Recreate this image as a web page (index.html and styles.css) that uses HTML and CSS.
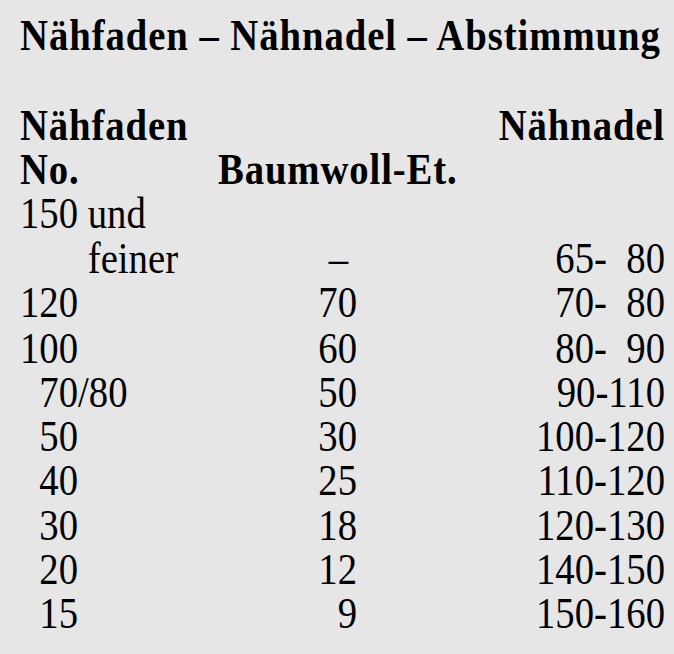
FILE: index.html
```html
<!DOCTYPE html>
<html lang="de">
<head>
<meta charset="utf-8">
<title>Nähfaden – Nähnadel – Abstimmung</title>
<link rel="stylesheet" href="styles.css">
</head>
<body>
<div class="sheet">
  <h1 class="title">Nähfaden – Nähnadel – Abstimmung</h1>
  <div class="table">
    <div class="c1 b">Nähfaden</div><div class="c2"></div><div class="c3 b">Nähnadel</div>
    <div class="c1 b">No.</div><div class="c2 b head">Baumwoll-Et.</div><div class="c3"></div>
    <div class="c1">150 und</div><div class="c2"></div><div class="c3"></div>
    <div class="c1 sub">feiner</div><div class="c2 dash">–</div><div class="c3">65-  80</div>
    <div class="c1">120</div><div class="c2">70</div><div class="c3">70-  80</div>
    <div class="c1">100</div><div class="c2">60</div><div class="c3">80-  90</div>
    <div class="c1 ind">70/80</div><div class="c2">50</div><div class="c3">90-110</div>
    <div class="c1 ind">50</div><div class="c2">30</div><div class="c3">100-120</div>
    <div class="c1 ind">40</div><div class="c2">25</div><div class="c3">110-120</div>
    <div class="c1 ind">30</div><div class="c2">18</div><div class="c3">120-130</div>
    <div class="c1 ind">20</div><div class="c2">12</div><div class="c3">140-150</div>
    <div class="c1 ind">15</div><div class="c2">9</div><div class="c3">150-160</div>
  </div>
</div>
</body>
</html>
```
FILE: styles.css
```css
html, body {
  margin: 0;
  padding: 0;
  background: #e6e6e6;
}
body {
  width: 674px;
  height: 654px;
  overflow: hidden;
}
.sheet {
  width: 674px;
  box-sizing: border-box;
  padding: 11.44px 0 0 20px;
  transform: scaleY(1.1364);
  transform-origin: 0 0;
  font-family: "Liberation Serif", "Times New Roman", serif;
  font-size: 38.72px;
  line-height: 39.16px;
  color: #000;
}
.title {
  margin: 0 0 39.16px 0;
  font-size: 38.72px;
  line-height: 39.16px;
  font-weight: bold;
  letter-spacing: 0.93px;
  white-space: nowrap;
}
.table {
  display: grid;
  grid-template-columns: 198px 139px 308px;
  grid-auto-rows: 39.16px;
}
.table > div {
  white-space: pre;
}
.c1 { text-align: left; }
.c2 { text-align: right; }
.c3 { text-align: right; }
.b {
  font-weight: bold;
  letter-spacing: 0.88px;
}
.head {
  text-align: left;
}
.sub { padding-left: 1.75em; }
.ind { padding-left: 0.5em; }
.dash { padding-right: 0.23em; }
```
